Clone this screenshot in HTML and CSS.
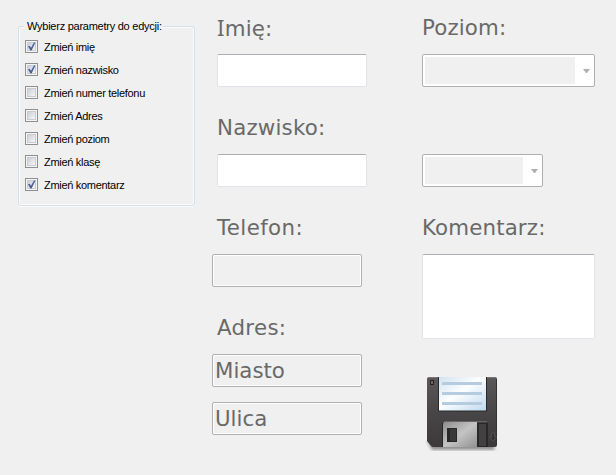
FILE: index.html
```html
<!DOCTYPE html>
<html lang="pl">
<head>
<meta charset="utf-8">
<title>Edycja</title>
<link rel="stylesheet" href="styles.css">
</head>
<body>
<form class="window">
  <section class="group">
    <h2 class="group-title">Wybierz parametry do edycji:</h2>
    <label class="option"><span class="box checked"></span><span class="caption">Zmień imię</span></label>
    <label class="option"><span class="box checked"></span><span class="caption">Zmień nazwisko</span></label>
    <label class="option"><span class="box"></span><span class="caption">Zmień numer telefonu</span></label>
    <label class="option"><span class="box"></span><span class="caption">Zmień Adres</span></label>
    <label class="option"><span class="box"></span><span class="caption">Zmień poziom</span></label>
    <label class="option"><span class="box"></span><span class="caption">Zmień klasę</span></label>
    <label class="option"><span class="box checked"></span><span class="caption">Zmień komentarz</span></label>
  </section>
  <section class="column person">
    <div class="label l-imie">Imię:</div>
    <div class="field active"></div>
    <div class="label l-nazwisko">Nazwisko:</div>
    <div class="field active"></div>
    <div class="label l-telefon">Telefon:</div>
    <div class="field disabled"></div>
    <div class="label l-adres">Adres:</div>
    <div class="field disabled city">Miasto</div>
    <div class="field disabled street">Ulica</div>
  </section>
  <section class="column details">
    <div class="label">Poziom:</div>
    <div class="combo"><span class="value"></span><span class="arrow"></span></div>
    <div class="combo short"><span class="value"></span><span class="arrow"></span></div>
    <div class="label">Komentarz:</div>
    <div class="field active comment"></div>
    <svg class="save" width="80" height="84" viewBox="0 0 80 84">
      <defs>
        <linearGradient id="body" x2="0" y2="1"><stop stop-color="#5b5859"/><stop offset=".45" stop-color="#4a4748"/><stop offset="1" stop-color="#3b393a"/></linearGradient>
        <linearGradient id="paper" x2="1" y2="1"><stop stop-color="#d0e2f0"/><stop offset=".45" stop-color="#fcfeff"/><stop offset="1" stop-color="#bfd9ed"/></linearGradient>
        <linearGradient id="metal" x2="1" y2="1"><stop stop-color="#8d8d8d"/><stop offset=".5" stop-color="#c4c4c4"/><stop offset="1" stop-color="#929292"/></linearGradient>
        <filter id="soft"><feGaussianBlur stdDeviation="1.5"/></filter>
      </defs>
      <path d="M6 66h65l3 9H11z" fill="#555" opacity=".6" filter="url(#soft)"/>
      <path d="M6 4q0-2 2-2h66q2 0 2 2v66q0 2-2 2H11l-5-6z" fill="url(#body)"/>
      <path d="M75.500 4v66" stroke="#343233" fill="none"/>
      <path d="M7 2.500h68" stroke="#797677"/>
      <path d="M17 2h49v34.500H17z" fill="#292829"/>
      <path d="M18 2h47v33.500H18z" fill="url(#paper)"/>
      <path d="M21 8.500h40M21 18.500h40M21 28.500h40" stroke="#b5cbdf" stroke-width="3"/>
      <path d="M9 5h4v5H9z" fill="#242324"/><path d="M10 6h2v3h-2z" fill="#6a6869"/>
      <path d="M21 48h46v24H21z" fill="#292829"/>
      <path d="M22 72V49q0-2 2-2h32v25z" fill="url(#metal)"/>
      <path d="M26 53h11v15H26z" fill="#bbb"/><path d="M26 53h10v14H26z" fill="#292829"/>
      <path d="M29 54h6v12h-6z" fill="#3a393a"/>
      <path d="M58 49h7v22h-7z" fill="#424041"/>
      <path d="M23 46.500h43" stroke="#666"/>
      <path d="M70.500 58h3v4h2l-3.500 4-3.500-4h2z" fill="#353334" stroke="#666" stroke-width=".5"/>
    </svg>
  </section>
</form>
</body>
</html>
```

FILE: styles.css
```css
* { box-sizing: border-box; }
body { margin: 0; background: #f0f0f0; }
.window {
  width: 616px; height: 475px; display: grid;
  grid-template-columns: 194px 210px 173px;
  padding-left: 18px; overflow: hidden;
}
.group {
  width: 177px; height: 180px; margin-top: 26px; padding-left: 6px;
  border: 1px solid #d5dfe5; border-radius: 3px;
  box-shadow: inset 0 0 0 1px #fbfbfb, 0 1px 0 #fbfbfb;
  font: 11px/13px "Liberation Sans", Arial, sans-serif; color: #000;
  letter-spacing: -.3px;
}
.group-title {
  width: 139px; height: 14px; margin: -8px 0 5px -1px; padding: 1px 0 0 3px;
  background: #f0f0f0; font-size: 11px; line-height: 13px; font-weight: normal;
  letter-spacing: -.25px; white-space: nowrap;
}
.option { height: 23px; display: flex; align-items: flex-start; gap: 6px; padding-top: 2px; white-space: nowrap; }
.caption { margin-top: 1px; }
.box {
  width: 13px; height: 13px; flex: none; border: 1px solid #8e8f8f;
  box-shadow: inset 0 0 0 1px #f5f5f5, inset 0 0 0 2px #c8ccd0;
  background: linear-gradient(135deg, #cbcfd5 20%, #f6f6f6 80%);
}
.checked::after {
  content: ""; display: block; width: 11px; height: 11px; background: #4a5f97;
  clip-path: polygon(2px 5.2px, 3.6px 4.8px, 5px 6.8px, 8px 1.600px, 9.400px 1.600px, 5.600px 9.500px, 4.400px 9.500px);
}
.column { padding-top: 12px; }
.label, .field { font: 21.33px/30px "DejaVu Sans", Verdana, sans-serif; color: #696969; white-space: nowrap; }
.label { height: 30px; padding: 1px 0 0 5px; letter-spacing: .2px; }
.details .label { padding-left: 0; letter-spacing: .15px; }
.l-imie { line-height: 28px; }
.l-imie::first-letter { font-family: "Noto Sans", sans-serif; font-size: 22px; }
.l-telefon { letter-spacing: .4px; }
.l-adres { letter-spacing: .3px; }
.field { width: 150px; height: 33px; margin: 12px 0 25px; border-radius: 2px; }
.active { border: 1px solid #e2e3ea; border-top-color: #abadb3; background: #fff; }
.person .active { margin-left: 5px; }
.disabled { border: 1px solid #afafaf; box-shadow: inset 0 0 0 1px #fff; padding: 1px 0 0 2px; }
.person .city { margin-bottom: 15px; }
.street { margin-top: 0; }
.combo {
  width: 173px; height: 33px; margin-top: 12px; padding: 2px 3px 2px 2px;
  display: flex; border: 1px solid #afafaf; border-radius: 2px; background: #fff;
}
.value { width: 150px; height: 27px; background: #f0f0f0; }
.arrow { margin: 12px 0 0 8px; width: 7px; height: 4px; background: #afafaf; clip-path: polygon(0 0, 100% 0, 57% 100%, 43% 100%); }
.short { width: 121px; margin: 67px 0 25px; }
.short .value { width: 98px; }
.details .comment { width: 173px; height: 85px; margin-bottom: 36px; }
.save { display: block; margin-left: -1px; }
```
